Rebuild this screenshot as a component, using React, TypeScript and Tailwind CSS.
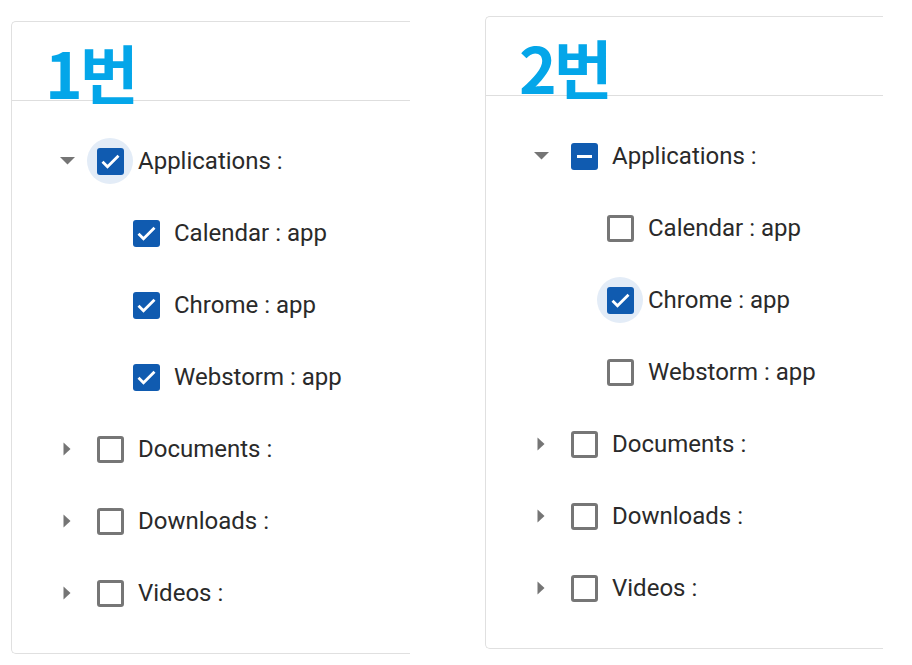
import React from 'react';

type Check = 'checked' | 'unchecked' | 'indeterminate';

interface Node {
  label: string;
  state: Check;
  focused?: boolean;
  expanded?: boolean;
  children?: Node[];
}

const TREE_1: Node[] = [
  {
    label: 'Applications :',
    state: 'checked',
    focused: true,
    expanded: true,
    children: [
      { label: 'Calendar : app', state: 'checked' },
      { label: 'Chrome : app', state: 'checked' },
      { label: 'Webstorm : app', state: 'checked' },
    ],
  },
  { label: 'Documents :', state: 'unchecked', children: [] },
  { label: 'Downloads :', state: 'unchecked', children: [] },
  { label: 'Videos :', state: 'unchecked', children: [] },
];

const TREE_2: Node[] = [
  {
    label: 'Applications :',
    state: 'indeterminate',
    expanded: true,
    children: [
      { label: 'Calendar : app', state: 'unchecked' },
      { label: 'Chrome : app', state: 'checked', focused: true },
      { label: 'Webstorm : app', state: 'unchecked' },
    ],
  },
  { label: 'Documents :', state: 'unchecked', children: [] },
  { label: 'Downloads :', state: 'unchecked', children: [] },
  { label: 'Videos :', state: 'unchecked', children: [] },
];

function Box({ state, focused }: { state: Check; focused?: boolean }) {
  return (
    <div
      className={`flex h-[46px] w-[46px] shrink-0 items-center justify-center rounded-full ${
        focused ? 'bg-[#e3ecf7]' : ''
      }`}
    >
      {state === 'unchecked' ? (
        <div className="h-[27px] w-[27px] rounded-[3px] border-[3px] border-[#767676]" />
      ) : (
        <div className="flex h-[27px] w-[27px] items-center justify-center rounded-[3px] bg-[#105bb0]">
          {state === 'checked' ? (
            <svg width="27" height="27" viewBox="0 0 27 27">
              <path d="M5.5 13.8l5 5 11-11" fill="none" stroke="#fff" strokeWidth="2.8" />
            </svg>
          ) : (
            <div className="h-[3px] w-[15px] bg-white" />
          )}
        </div>
      )}
    </div>
  );
}

function Arrow({ open }: { open?: boolean }) {
  return (
    <div className="flex w-[46px] shrink-0 items-center justify-center">
      {open ? (
        <svg width="15" height="8" viewBox="0 0 15 8">
          <path d="M0 0h15l-7.5 7.5z" fill="#757575" />
        </svg>
      ) : (
        <svg width="8" height="14" viewBox="0 0 8 14">
          <path d="M0.5 0.5v13l7-6.5z" fill="#757575" />
        </svg>
      )}
    </div>
  );
}

function Row({ node, depth }: { node: Node; depth: number }) {
  return (
    <>
      <div className="flex h-[72px] items-center" style={{ paddingLeft: depth * 36 }}>
        {node.children ? <Arrow open={node.expanded} /> : <div className="w-[46px] shrink-0" />}
        <div className="-ml-[3px]">
          <Box state={node.state} focused={node.focused} />
        </div>
        <span className="ml-[5px] text-[24px] text-[#2a2a2a]">{node.label}</span>
      </div>
      {node.expanded && node.children?.map((c) => <Row key={c.label} node={c} depth={depth + 1} />)}
    </>
  );
}

function Panel({ title, tree, className }: { title: string; tree: Node[]; className: string }) {
  return (
    <div className={`overflow-hidden rounded-l-[5px] border-y border-l border-[#e0e0e0] bg-white ${className}`}>
      <div className="flex h-[79px] items-end border-b border-[#dedede] pl-[33px]">
        <span
          className="-mb-[3px] text-[64px] font-bold leading-none tracking-[-3px] text-[#04a6e9]"
          style={{ fontFamily: '"Noto Sans CJK KR", sans-serif' }}
        >
          {title}
        </span>
      </div>
      <div className="py-[24px] pl-[32px]">
        {tree.map((n) => (
          <Row key={n.label} node={n} depth={0} />
        ))}
      </div>
    </div>
  );
}

export default function App() {
  return (
    <div
      className="flex h-[665px] w-[912px] items-start bg-white pl-[11px]"
      style={{ fontFamily: 'Roboto, "Noto Sans CJK KR", sans-serif' }}
    >
      <Panel title="1번" tree={TREE_1} className="mt-[21px] w-[399px]" />
      <Panel title="2번" tree={TREE_2} className="ml-[75px] mt-[16px] w-[398px]" />
    </div>
  );
}
